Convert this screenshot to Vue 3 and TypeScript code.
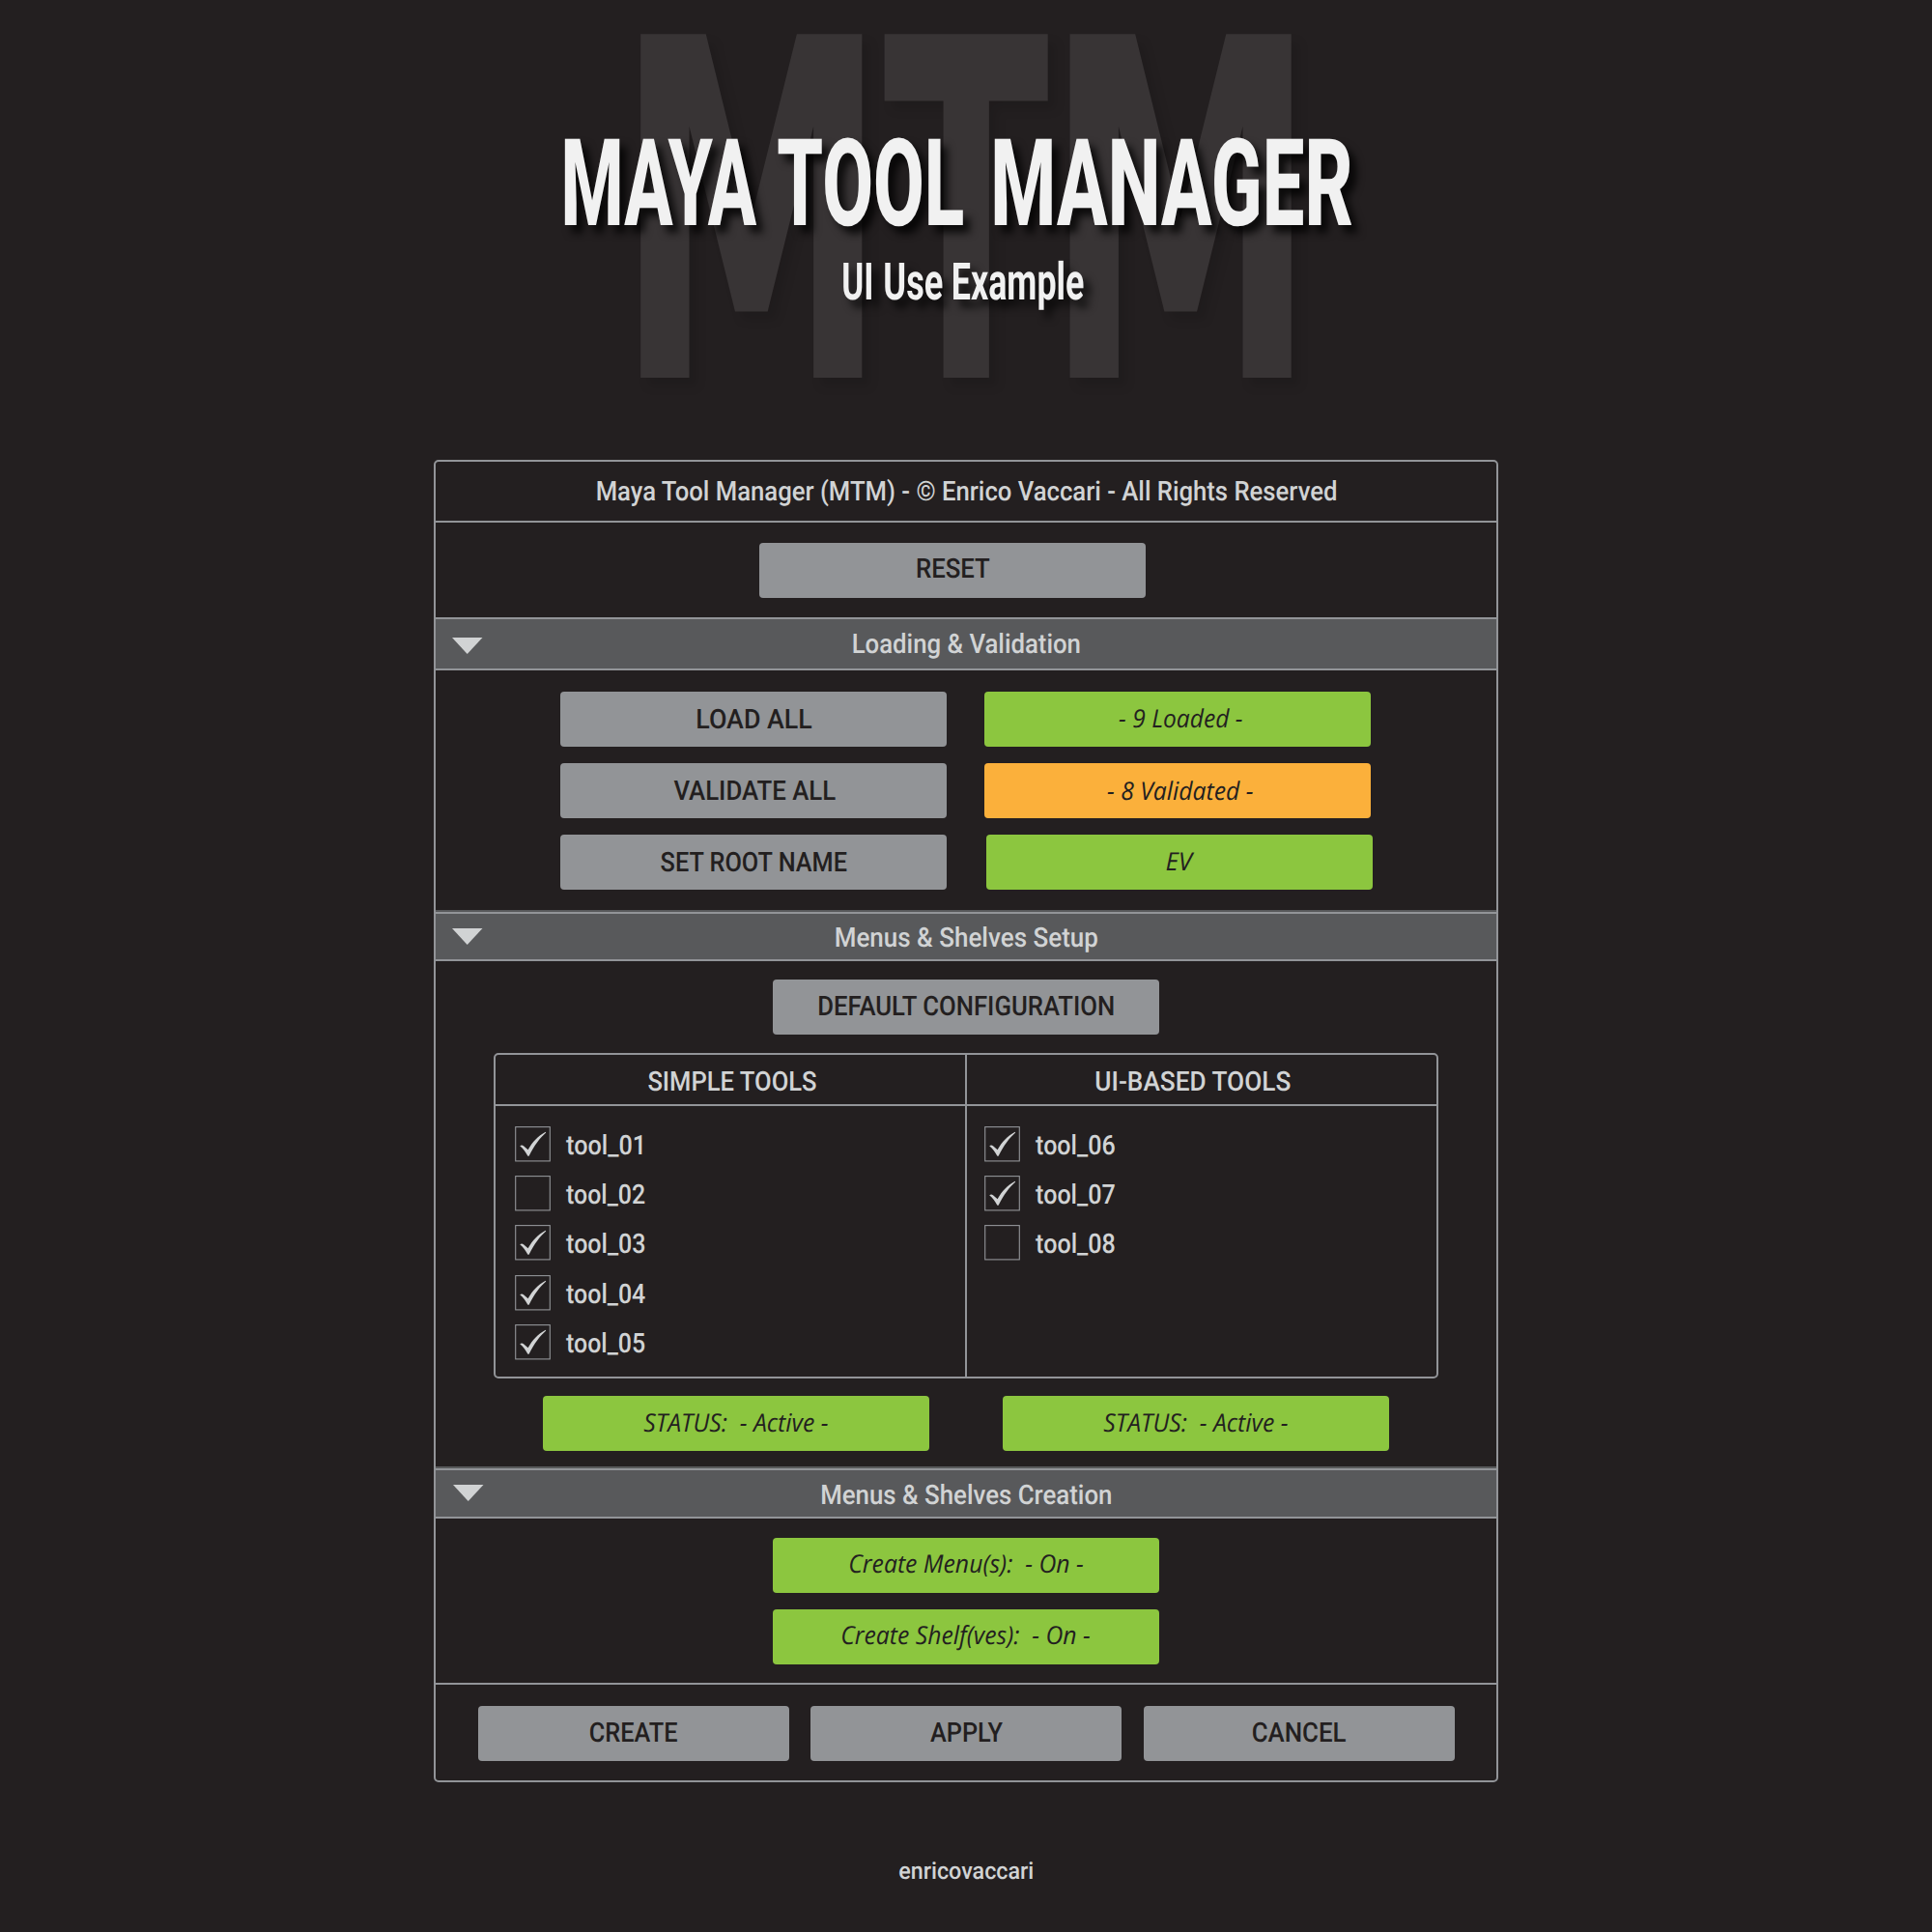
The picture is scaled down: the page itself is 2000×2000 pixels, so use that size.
<script setup lang="ts">
import { h } from 'vue'

interface LabelProps {
  text: string
  /** width of the drawn glyphs, in px */
  w: number
  /** box height and baseline inside it */
  h: number
  base: number
  size?: number
  weight?: number
  italic?: boolean
  family?: string
  dx?: number
}

const ctx = document.createElement('canvas').getContext('2d')!
const PRECISION = 8

// A single line of text, condensed horizontally so its glyphs span exactly `w`.
const Label = (p: LabelProps) => {
  const size = p.size ?? 28
  const weight = p.weight ?? (p.italic ? 400 : 500)
  const family = p.family ?? (p.italic ? '"Open Sans", sans-serif' : 'Roboto, sans-serif')
  const style = p.italic ? 'italic' : 'normal'
  ctx.font = `${style} ${weight} ${size * PRECISION}px ${family}`
  const m = ctx.measureText(p.text)
  const scale = (p.w * PRECISION) / (m.actualBoundingBoxLeft + m.actualBoundingBoxRight)
  const x = (m.actualBoundingBoxLeft * scale) / PRECISION + (p.dx ?? 0)
  return h('svg', { class: 'label', width: p.w, height: p.h }, [
    h(
      'text',
      {
        transform: `translate(${x} ${p.base}) scale(${scale} 1)`,
        'font-family': family,
        'font-size': size,
        'font-weight': weight,
        'font-style': style,
        'text-rendering': 'geometricPrecision',
        fill: 'currentColor',
      },
      p.text,
    ),
  ])
}
Label.props = {
  text: String,
  w: Number,
  h: Number,
  base: Number,
  size: Number,
  weight: Number,
  italic: Boolean,
  family: String,
  dx: Number,
}

const nb = '\u00a0'

const backdrop = [
  { text: 'M', w: 234, dx: -3.7 },
  { text: 'T', w: 173, dx: -5.6 },
  { text: 'M', w: 234, dx: -12.3 },
]

const simpleTools = [
  { name: 'tool_01', w: 78, on: true },
  { name: 'tool_02', w: 81, on: false },
  { name: 'tool_03', w: 81, on: true },
  { name: 'tool_04', w: 81.5, on: true },
  { name: 'tool_05', w: 81, on: true },
]
const uiTools = [
  { name: 'tool_06', w: 81.5, on: true },
  { name: 'tool_07', w: 81.5, on: true },
  { name: 'tool_08', w: 81.5, on: false },
]
const toolColumns = [simpleTools, uiTools]
</script>

<template>
  <div class="page">
    <header class="hero">
      <div class="backdrop">
        <Label
          v-for="(l, i) in backdrop"
          :key="i"
          :text="l.text"
          :w="l.w"
          :dx="l.dx"
          :h="400"
          :base="391"
          :size="488"
          :weight="700"
          family="'DejaVu Sans', sans-serif"
        />
      </div>
      <div class="titles">
        <h1 class="title">
          <Label text="MAYA" :w="200" :h="110" :base="99.3" :size="125.5" :weight="850" :dx="-1" />
          <Label class="w2" text="TOOL" :w="192" :h="110" :base="99.3" :size="125.5" :weight="850" :dx="-0.5" />
          <Label class="w3" text="MANAGER" :w="370" :h="110" :base="99.3" :size="125.5" :weight="850" :dx="-1" />
        </h1>
        <h2 class="subtitle">
          <Label text="UI" :w="29.5" :h="60" :base="46" :size="53.5" :weight="700" />
          <Label class="s2" text="Use" :w="59.5" :h="60" :base="46" :size="53.5" :weight="700" />
          <Label class="s3" text="Example" :w="134.5" :h="60" :base="46" :size="53.5" :weight="700" />
        </h2>
      </div>
    </header>

    <main class="panel">
      <div class="caption">
        <Label
          text="Maya Tool Manager (MTM) - © Enrico Vaccari - All Rights Reserved"
          :w="765"
          :h="61"
          :base="40.3"
          :dx="0.5"
        />
      </div>
      <div class="reset">
        <button class="btn"><Label text="RESET" :w="74.5" :h="57" :base="36.3" :dx="0.8" /></button>
      </div>

      <div class="bar first">
        <svg class="arrow" width="32" height="17" viewBox="0 0 32 17"><path d="M0 0H31.5L15.7 17Z" /></svg>
        <Label text="Loading &amp; Validation" :w="234" :h="51" :base="35.3" :dx="0.5" />
      </div>
      <div class="loading">
        <div class="row">
          <button class="btn"><Label text="LOAD ALL" :w="118" :h="57" :base="37.8" :dx="1.2" /></button>
          <div class="btn green"><Label text="- 9 Loaded -" :w="127" :h="57" :base="37" :size="26" italic :dx="2.7" /></div>
        </div>
        <div class="row">
          <button class="btn"><Label text="VALIDATE ALL" :w="167" :h="57" :base="37.8" :dx="0.5" /></button>
          <div class="btn orange"><Label text="- 8 Validated -" :w="150" :h="57" :base="37.8" :size="26" italic :dx="2.7" /></div>
        </div>
        <div class="row">
          <button class="btn"><Label text="SET ROOT NAME" :w="193" :h="57" :base="37.8" :dx="0.5" /></button>
          <div class="btn green shift"><Label text="EV" :w="29" :h="57" :base="37" :size="26" italic :dx="1.5" /></div>
        </div>
      </div>

      <div class="bar">
        <svg class="arrow" width="32" height="17" viewBox="0 0 32 17"><path d="M0 0H31.5L15.7 17Z" /></svg>
        <Label text="Menus &amp; Shelves Setup" :w="270.5" :h="47" :base="34" :dx="0.5" />
      </div>
      <div class="setup">
        <button class="btn"><Label text="DEFAULT CONFIGURATION" :w="305" :h="57" :base="37" /></button>
        <div class="table">
          <div class="thead">
            <div class="th"><Label text="SIMPLE TOOLS" :w="174" :h="51" :base="36.6" :dx="2.3" /></div>
            <div class="th"><Label text="UI-BASED TOOLS" :w="201" :h="51" :base="36.6" :dx="-9" /></div>
          </div>
          <div class="tbody">
            <div v-for="(col, c) in toolColumns" :key="c" class="col">
              <div v-for="t in col" :key="t.name" class="tool">
                <svg class="check" width="37" height="37" viewBox="0 0 37 37">
                  <rect x="0.7" y="0.6" width="35.6" height="35.3" />
                  <path
                    v-if="t.on"
                    d="M5.2 20.2C6.5 19.4 7.8 19.2 9 20.3L13.6 24.2C18.5 15.8 23.8 10.2 31.8 5.8L32.2 6.6C26 12 20.2 19.6 14.6 30.8H13.4C11 26.6 8.8 23.2 5.2 20.2Z"
                  />
                </svg>
                <Label :text="t.name" :w="t.w" :h="37" :base="28.5" :dx="-0.8" />
              </div>
            </div>
          </div>
        </div>
        <div class="statuses">
          <div class="btn green"><Label :text="`STATUS:${nb} - Active -`" :w="190" :h="57" :base="37.2" :size="26" italic :dx="-0.3" /></div>
          <div class="btn green"><Label :text="`STATUS:${nb} - Active -`" :w="190" :h="57" :base="37.2" :size="26" italic :dx="-0.3" /></div>
        </div>
      </div>

      <div class="bar last">
        <svg class="arrow" width="32" height="17" viewBox="0 0 32 17"><path d="M0 0H31.5L15.7 17Z" /></svg>
        <Label text="Menus &amp; Shelves Creation" :w="299" :h="48" :base="34.5" />
      </div>
      <div class="creation">
        <div class="btn green"><Label :text="`Create Menu(s):${nb} - On -`" :w="241" :h="57" :base="36.2" :size="26" italic /></div>
        <div class="btn green"><Label :text="`Create Shelf(ves):${nb} - On -`" :w="256" :h="57" :base="36.2" :size="26" italic /></div>
      </div>
      <div class="actions">
        <button class="btn"><Label text="CREATE" :w="90" :h="57" :base="36.8" /></button>
        <button class="btn"><Label text="APPLY" :w="75" :h="57" :base="36.8" /></button>
        <button class="btn"><Label text="CANCEL" :w="96" :h="57" :base="36.8" /></button>
      </div>
    </main>

    <footer class="foot"><Label text="enricovaccari" :w="138" :h="40" :base="30" :size="24.5" /></footer>
  </div>
</template>

<style>
html,
body {
  margin: 0;
  background: #231f20;
}
</style>

<style scoped>
.page {
  width: 2000px;
  height: 2000px;
  overflow: hidden;
  background: #231f20;
  color: #d1d3d4;
  font-family: Roboto, sans-serif;
}
.page :deep(.label) {
  display: block;
  overflow: visible;
  flex: none;
}
.hero {
  display: grid;
  height: 476px;
}
.backdrop,
.titles {
  grid-area: 1 / 1;
}
.backdrop {
  display: flex;
  gap: 22.7px;
  padding-left: 663.3px;
  color: #383435;
  filter: drop-shadow(8px 9px 5px rgba(0, 0, 0, 0.1));
}
.titles {
  color: #f1f1f1;
  filter: drop-shadow(7px 8px 4px rgba(0, 0, 0, 0.8));
}
.title {
  display: flex;
  margin: 134px 0 0 585.3px;
}
.w2 {
  margin-left: 21px;
}
.w3 {
  margin-left: 31.5px;
}
.subtitle {
  display: flex;
  margin: 20px 0 0 872.6px;
}
.s2 {
  margin-left: 13.5px;
}
.s3 {
  margin-left: 12px;
}
.panel {
  display: flex;
  flex-direction: column;
  box-sizing: border-box;
  width: 1102px;
  height: 1369px;
  margin-left: 449px;
  border: 2px solid #929498;
  border-radius: 5px;
}
.caption {
  display: flex;
  justify-content: center;
  height: 61px;
  border-bottom: 2px solid #929498;
}
.reset {
  display: flex;
  justify-content: center;
  box-sizing: border-box;
  height: 98px;
  padding: 20.5px 28px 0 0;
}
.btn {
  display: flex;
  justify-content: center;
  flex: none;
  width: 400px;
  height: 57px;
  padding: 0;
  border: 0;
  border-radius: 4px;
  background: #929497;
  color: #231f20;
}
.green {
  background: #8cc63f;
}
.orange {
  background: #fbb03b;
}
.bar {
  display: flex;
  justify-content: center;
  box-sizing: border-box;
  position: relative;
  height: 51px;
  border-top: 2px solid #929498;
  border-bottom: 2px solid #929498;
  background: #58595b;
  box-shadow: 0 -2px 0 #58595b;
}
.bar.first {
  height: 55px;
  box-shadow: none;
}
.bar.last {
  height: 52px;
}
.arrow {
  position: absolute;
  left: 17px;
  top: 15px;
  fill: #d1d3d4;
}
.first .arrow {
  top: 19px;
}
.last .arrow {
  left: 18px;
}
.loading {
  display: flex;
  flex-direction: column;
  gap: 17px;
  box-sizing: border-box;
  height: 250px;
  padding: 22px 0 0 129px;
}
.row {
  display: flex;
  gap: 39px;
}
.shift {
  margin-left: 1.5px;
}
.setup {
  display: flex;
  flex-direction: column;
  align-items: center;
  box-sizing: border-box;
  height: 525px;
  padding-top: 19px;
}
.table {
  box-sizing: border-box;
  width: 978px;
  height: 337px;
  margin-top: 19px;
  border: 2px solid #929498;
  border-radius: 5px;
}
.thead,
.tbody {
  display: grid;
  grid-template-columns: 486px 488px;
}
.thead {
  height: 51px;
  border-bottom: 2px solid #929498;
}
.th,
.col {
  box-sizing: border-box;
}
.th {
  display: flex;
  justify-content: center;
}
.th + .th,
.col + .col {
  border-left: 2px solid #929498;
}
.col {
  display: flex;
  flex-direction: column;
  gap: 14.4px;
  height: 280px;
  padding: 20.7px 0 0 20px;
}
.col + .col {
  padding-left: 18px;
}
.tool {
  display: flex;
  gap: 17px;
}
.check rect {
  fill: none;
  stroke: #929498;
  stroke-width: 1.1;
}
.check path {
  fill: #d1d3d4;
}
.statuses {
  display: flex;
  gap: 75.5px;
  margin-top: 17.5px;
}
.creation {
  display: flex;
  flex-direction: column;
  align-items: center;
  gap: 17.2px;
  box-sizing: border-box;
  height: 172px;
  padding-top: 19.5px;
  border-bottom: 2px solid #929498;
}
.actions {
  display: flex;
  justify-content: center;
  gap: 22.5px;
  padding-top: 21.5px;
}
.actions .btn {
  width: 322px;
}
.foot {
  display: flex;
  justify-content: center;
  margin-top: 70px;
}
</style>
